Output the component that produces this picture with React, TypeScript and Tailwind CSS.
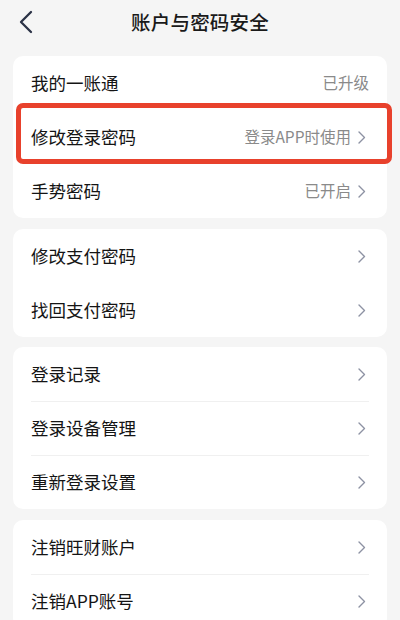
import React from "react";

type Row = { label: string; value?: string; arrow: boolean };

const groups: { rows: Row[]; divider: boolean; mt: string }[] = [
  {
    mt: "mt-[12px]",
    divider: false,
    rows: [
      { label: "我的一账通", value: "已升级", arrow: false },
      { label: "修改登录密码", value: "登录APP时使用", arrow: true },
      { label: "手势密码", value: "已开启", arrow: true },
    ],
  },
  {
    mt: "mt-[11px]",
    divider: false,
    rows: [
      { label: "修改支付密码", arrow: true },
      { label: "找回支付密码", arrow: true },
    ],
  },
  {
    mt: "mt-[10px]",
    divider: true,
    rows: [
      { label: "登录记录", arrow: true },
      { label: "登录设备管理", arrow: true },
      { label: "重新登录设置", arrow: true },
    ],
  },
  {
    mt: "mt-[11px]",
    divider: true,
    rows: [
      { label: "注销旺财账户", arrow: true },
      { label: "注销APP账号", arrow: true },
    ],
  },
];

function Chevron() {
  return (
    <svg width="10" height="13" viewBox="0 0 10 13" className="ml-[6px] mr-[2px]">
      <polyline
        points="2,1 7.5,6.5 2,12"
        fill="none"
        stroke="#8d92a3"
        strokeWidth="1.4"
        strokeLinecap="round"
        strokeLinejoin="round"
      />
    </svg>
  );
}

export default function App() {
  return (
    <div
      className="w-[400px] h-[620px] overflow-hidden bg-[#f5f5f5] flex flex-col"
      style={{ fontFamily: '"Noto Sans CJK SC", "Noto Sans", sans-serif' }}
    >
      {/* header */}
      <div className="relative h-[44px] flex items-center justify-center shrink-0">
        <button className="absolute left-[16px] top-[9px] w-[20px] h-[26px] flex items-center justify-center">
          <svg width="16" height="24" viewBox="0 0 16 24">
            <polyline
              points="13,2 3,12 13,22"
              fill="none"
              stroke="#2b3246"
              strokeWidth="2.3"
              strokeLinecap="round"
              strokeLinejoin="round"
            />
          </svg>
        </button>
        <h1 className="text-[19.5px] font-medium text-[#1a1a1a] tracking-[0.2px]">账户与密码安全</h1>
      </div>

      <div className="px-[13px] flex flex-col">
        {groups.map((g, gi) => (
          <div key={gi} className={`${g.mt} bg-white rounded-[10px] px-[18px]`}>
            {g.rows.map((r, ri) => (
              <div
                key={r.label}
                className={`relative h-[54px] flex items-center ${
                  g.divider && ri > 0 ? "border-t border-[#f0f0f0]" : ""
                }`}
              >
                <span className="flex-1 text-[17.5px] text-[#141414]">{r.label}</span>
                {r.value && <span className="text-[15.5px] text-[#8a8a8a]">{r.value}</span>}
                {r.arrow && <Chevron />}
                {gi === 0 && ri === 1 && (
                  <div className="absolute left-[-15px] right-[-23px] top-[-7px] bottom-[0px] border-[5px] border-[#e8412c] rounded-[7px] pointer-events-none" />
                )}
              </div>
            ))}
          </div>
        ))}
      </div>
    </div>
  );
}
